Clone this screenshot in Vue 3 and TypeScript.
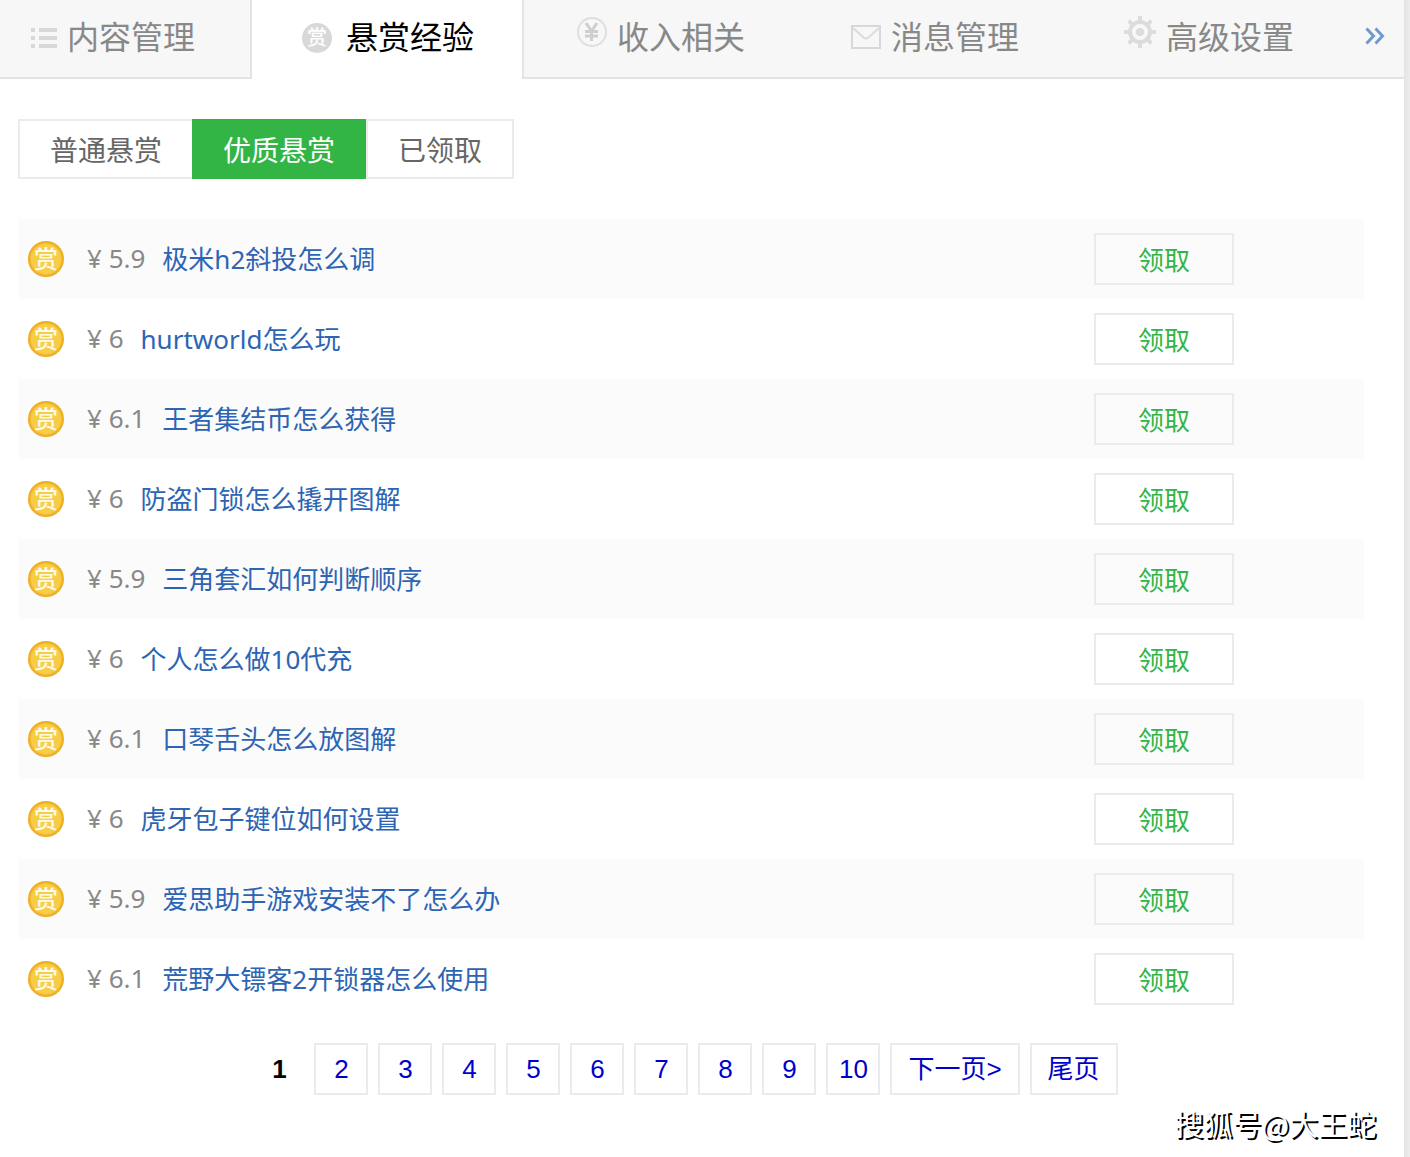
<script setup lang="ts">
import { ref } from 'vue'

interface Tab {
  label: string
  icon: 'list' | 'reward' | 'income' | 'mail' | 'gear'
}

interface Reward {
  price: string
  title: string
}

const tabs: Tab[] = [
  { label: '内容管理', icon: 'list' },
  { label: '悬赏经验', icon: 'reward' },
  { label: '收入相关', icon: 'income' },
  { label: '消息管理', icon: 'mail' },
  { label: '高级设置', icon: 'gear' },
]
const activeTab = ref(1)

const filters: string[] = ['普通悬赏', '优质悬赏', '已领取']
const activeFilter = ref(1)

const rewards: Reward[] = [
  { price: '5.9', title: '极米h2斜投怎么调' },
  { price: '6', title: 'hurtworld怎么玩' },
  { price: '6.1', title: '王者集结币怎么获得' },
  { price: '6', title: '防盗门锁怎么撬开图解' },
  { price: '5.9', title: '三角套汇如何判断顺序' },
  { price: '6', title: '个人怎么做10代充' },
  { price: '6.1', title: '口琴舌头怎么放图解' },
  { price: '6', title: '虎牙包子键位如何设置' },
  { price: '5.9', title: '爱思助手游戏安装不了怎么办' },
  { price: '6.1', title: '荒野大镖客2开锁器怎么使用' },
]

const pages: number[] = [2, 3, 4, 5, 6, 7, 8, 9, 10]
const gearTeeth: number[] = [0, 45, 90, 135, 180, 225, 270, 315]
</script>

<template>
  <div class="page">
    <div class="main">
      <nav class="tabs">
        <a
          v-for="(tab, i) in tabs"
          :key="tab.label"
          href="#"
          class="tab"
          :class="[tab.icon, { active: i === activeTab }]"
          @click.prevent="activeTab = i"
        >
          <svg v-if="tab.icon === 'list'" class="icon lowered" width="26" height="20" viewBox="0 0 26 20" fill="#d8d8d8">
            <path d="M0 0h4v4H0zM8 0h18v4H8zM0 8h4v4H0zM8 8h18v4H8zM0 16h4v4H0zM8 16h18v4H8z" />
          </svg>
          <span v-else-if="tab.icon === 'reward'" class="icon lowered seal">赏</span>
          <svg v-else-if="tab.icon === 'income'" class="icon raised" width="30" height="30" viewBox="0 0 30 30" fill="none">
            <circle cx="15" cy="15" r="14" stroke="#dedede" stroke-width="2" />
            <path d="M9 6l5.500 8L20 6M14.500 14v10M8 14.500h13M8 19h13" stroke="#cfcfcf" stroke-width="3" />
          </svg>
          <svg v-else-if="tab.icon === 'mail'" class="icon" width="30" height="24" viewBox="0 0 30 24" fill="none">
            <rect x="1" y="1" width="28" height="22" stroke="#d8d8d8" stroke-width="2" />
            <path d="M2 3l10.500 9.500q2.500 2 5 0L28 3" stroke="#dcdcdc" stroke-width="2" />
          </svg>
          <svg v-else class="icon raised" width="32" height="32" viewBox="0 0 32 32" fill="none">
            <g fill="#dcdcdc">
              <path
                v-for="angle in gearTeeth"
                :key="angle"
                d="M14 0h4v6h-4z"
                :transform="`rotate(${angle} 16 16)`"
              />
            </g>
            <circle cx="16" cy="16" r="10" stroke="#dcdcdc" stroke-width="4" />
            <circle cx="16" cy="16" r="4" fill="#dcdcdc" />
          </svg>
          <span>{{ tab.label }}</span>
        </a>
        <button type="button" class="more" aria-label="更多">
          <svg width="20" height="18" viewBox="0 0 20 18" fill="none" stroke="#7098d0" stroke-width="3">
            <path d="M1.500 1.500l7 7.500-7 7.500M10.500 1.500l7 7.500-7 7.500" />
          </svg>
        </button>
      </nav>

      <div class="content">
        <div class="filters">
          <button
            v-for="(name, i) in filters"
            :key="name"
            type="button"
            class="filter"
            :class="{ active: i === activeFilter }"
            @click="activeFilter = i"
          >
            {{ name }}
          </button>
        </div>

        <ul class="rewards">
          <li v-for="item in rewards" :key="item.title" class="reward-row">
            <span class="coin">赏</span>
            <span class="price">¥ {{ item.price }}</span>
            <a href="#" class="title" @click.prevent>{{ item.title }}</a>
            <button type="button" class="claim">领取</button>
          </li>
        </ul>

        <nav class="pager">
          <strong class="page-item current">1</strong>
          <a v-for="n in pages" :key="n" href="#" class="page-item" @click.prevent>{{ n }}</a>
          <a href="#" class="page-item wide" @click.prevent>下一页&gt;</a>
          <a href="#" class="page-item wide" @click.prevent>尾页</a>
        </nav>
      </div>

      <footer class="credit">搜狐号@大王蛇</footer>
    </div>
    <div class="edge"></div>
  </div>
</template>

<style>
body {
  margin: 0;
  background: #fff;
}
</style>

<style scoped>
.page {
  display: flex;
  min-height: 100vh;
  font-family: "Noto Sans", "Noto Sans CJK SC", sans-serif;
  font-size: 26px;
}

.main {
  flex: 1;
  min-width: 0;
}

.edge {
  width: 6px;
  background: linear-gradient(to right, #e4e4e4, #ececec);
}

a {
  text-decoration: none;
}

button {
  margin: 0;
  padding: 0;
  background: none;
  border: 0;
  font-family: inherit;
  cursor: pointer;
}

.tabs {
  display: flex;
  height: 79px;
  background: #f7f7f7;
}

.tab {
  box-sizing: border-box;
  display: flex;
  align-items: center;
  gap: 10px;
  width: 274px;
  padding: 0 0 4px 53px;
  border-bottom: 2px solid #e4e4e4;
  color: #888;
  font-size: 32px;
  line-height: 48px;
  white-space: nowrap;
}

.tab.list {
  width: 250px;
  padding-left: 31px;
}

.tab.reward {
  gap: 14px;
  padding-left: 50px;
}

.tab.gear {
  padding-left: 52px;
}

.tab.active {
  background: #fff;
  border: solid #e4e4e4;
  border-width: 0 2px;
  padding-bottom: 6px;
  color: #000;
}

.icon {
  flex: none;
}

.icon.raised {
  margin-bottom: 10px;
}

.icon.lowered {
  margin-top: 2px;
}

.seal {
  width: 30px;
  height: 30px;
  border-radius: 50%;
  background: #d8d8d8;
  color: #fff;
  font-size: 20px;
  font-weight: 500;
  line-height: 30px;
  text-align: center;
}

.more {
  flex: 1;
  padding: 0 19px 6px 0;
  border-bottom: 2px solid #e4e4e4;
  text-align: right;
}

.more svg {
  vertical-align: middle;
}

.content {
  padding: 40px 40px 0 18px;
}

.filters {
  display: flex;
}

.filter {
  box-sizing: border-box;
  height: 60px;
  padding: 2px 30px 0;
  border: solid #ebebeb;
  border-width: 2px 0 2px 2px;
  color: #666;
  font-size: 28px;
  line-height: 54px;
}

.filter:last-child {
  border-right-width: 2px;
}

.filter.active {
  padding: 2px 31px 0;
  border-color: #33b545;
  border-left-width: 0;
  background: #33b545;
  color: #fff;
}

.rewards {
  margin: 40px 0 0;
  padding: 0;
  list-style: none;
}

.reward-row {
  display: flex;
  align-items: center;
  height: 80px;
  padding: 0 130px 0 10px;
}

.reward-row:nth-child(odd) {
  background: #fbfbfb;
}

.coin {
  width: 36px;
  height: 36px;
  margin-right: 23px;
  border-radius: 50%;
  background: radial-gradient(circle closest-side, #f7cd48 0 80%, #f0b429 90%, #eca81e 100%);
  color: #fffbe6;
  font-size: 24px;
  font-weight: 500;
  line-height: 36px;
  text-align: center;
}

.price {
  margin-right: 17px;
  color: #888;
}

.title {
  color: #2d64b3;
}

.price,
.title {
  padding-bottom: 2px;
}

.claim {
  box-sizing: border-box;
  width: 140px;
  height: 52px;
  margin-left: auto;
  padding-top: 2px;
  border: 2px solid #ebebeb;
  color: #33b545;
  font-size: 26px;
  line-height: 46px;
}

.pager {
  display: flex;
  justify-content: center;
  gap: 10px;
  padding: 24px 10px 0 0;
  font-family: "Liberation Sans", "Noto Sans CJK SC", sans-serif;
}

.page-item {
  box-sizing: border-box;
  width: 54px;
  height: 52px;
  border: 2px solid #e7ecf0;
  color: #00c;
  line-height: 48px;
  text-align: center;
  white-space: nowrap;
}

.page-item.wide {
  width: auto;
  padding: 0 16px;
}

.page-item.current {
  width: 50px;
  border-color: transparent;
  color: #000;
}

.credit {
  padding: 8px 28px 0 0;
  color: #fff;
  font-family: "Noto Sans CJK SC", sans-serif;
  font-size: 29px;
  line-height: 40px;
  text-align: right;
  text-shadow: 2px 2px 0 #000;
}
</style>
